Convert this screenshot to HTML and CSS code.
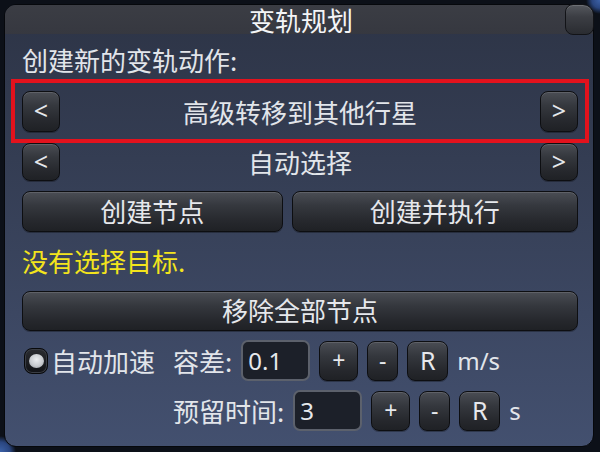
FILE: index.html
```html
<!DOCTYPE html>
<html lang="zh-CN">
<head>
<meta charset="utf-8">
<title>变轨规划</title>
<link rel="stylesheet" href="styles.css">
</head>
<body>
<div class="window">
  <div class="titlebar">
    <span class="spacer"></span>
    <div class="title">变轨规划</div>
    <button class="close" aria-label="关闭"></button>
  </div>
  <div class="content">
    <div class="label">创建新的变轨动作:</div>
    <div class="selector highlight">
      <button class="btn arrow tall lat">&lt;</button>
      <div class="sel-text">高级转移到其他行星</div>
      <button class="btn arrow tall lat">&gt;</button>
    </div>
    <div class="selector">
      <button class="btn arrow lat">&lt;</button>
      <div class="sel-text">自动选择</div>
      <button class="btn arrow lat">&gt;</button>
    </div>
    <div class="btn-row">
      <button class="btn wide">创建节点</button>
      <button class="btn wide">创建并执行</button>
    </div>
    <div class="warn">没有选择目标.</div>
    <button class="btn full">移除全部节点</button>
    <div class="param-row">
      <div class="lead">
        <span class="radio"><span class="dot"></span></span>
        <span class="text">自动加速</span>
      </div>
      <div class="controls">
        <span class="text">容差:</span>
        <div class="field lat">0.1</div>
        <button class="btn small plus lat">+</button>
        <button class="btn small minus lat">-</button>
        <button class="btn small reset lat">R</button>
        <span class="unit lat">m/s</span>
      </div>
    </div>
    <div class="param-row">
      <div class="lead"></div>
      <div class="controls">
        <span class="text">预留时间:</span>
        <div class="field lat">3</div>
        <button class="btn small plus lat">+</button>
        <button class="btn small minus lat">-</button>
        <button class="btn small reset lat">R</button>
        <span class="unit lat">s</span>
      </div>
    </div>
  </div>
</div>
</body>
</html>
```

FILE: styles.css
```css
* { box-sizing: border-box; }

html, body {
  margin: 0;
  width: 600px;
  height: 452px;
  overflow: hidden;
}

body {
  padding: 4px;
  background:
    radial-gradient(circle at 0 452px, #3d62a8 0, #2a4680 10px, rgba(13,17,25,0) 16px),
    radial-gradient(circle at 600px 0, #3d62a8 0, #2a4680 8px, rgba(13,17,25,0) 14px),
    #0c1018;
  font-family: "Noto Sans CJK SC", "Noto Sans", sans-serif;
  font-size: 26px;
  color: #e2e5ea;
}

.lat {
  font-family: "Noto Sans", "Open Sans", "Noto Sans CJK SC", sans-serif;
}

.window {
  width: 590px;
  height: 443px;
  border-radius: 12px;
  border: 1px solid #06080c;
  background: linear-gradient(#2d3446 0%, #343d53 35%, #3c4762 70%, #43506f 100%);
  display: flex;
  flex-direction: column;
}

.titlebar {
  height: 29px;
  flex: none;
  display: grid;
  grid-template-columns: 1fr auto 1fr;
  align-items: start;
  border-radius: 11px 11px 0 0;
  background: linear-gradient(#3b3d44, #363840);
}

.title {
  line-height: 29px;
  color: #f4f5f7;
  padding-left: 4px;
}

.close {
  justify-self: end;
  width: 29px;
  height: 31px;
  margin: -1px -1px 0 0;
  border-radius: 8px 11px 8px 8px;
  border: 1px solid #121317;
  background: linear-gradient(#55585e 0%, #3c3e44 40%, #2a2c31 100%);
  box-shadow: inset 0 1px 0 rgba(255,255,255,0.15);
  padding: 0;
}

.content {
  padding: 0 15px 0 17px;
  display: flex;
  flex-direction: column;
}

.label {
  margin-top: 11px;
  line-height: 30px;
  height: 30px;
}

.selector {
  display: flex;
  align-items: center;
  height: 38px;
}

.selector.highlight {
  margin: 4px -11px 0 -11px;
  height: 64px;
  border: 4px solid #e3121d;
  padding: 4px 7px 3px 7px;
}

.sel-text {
  flex: 1;
  text-align: center;
  line-height: 38px;
}

.btn {
  font-family: inherit;
  font-size: 26px;
  color: #e6e8ec;
  border: 1px solid #0d0e11;
  border-radius: 8px;
  background: linear-gradient(#4a4d54 0%, #35383e 35%, #26282d 75%, #1f2125 100%);
  box-shadow: inset 0 1px 0 rgba(255,255,255,0.12), 0 1px 0 rgba(0,0,0,0.3);
  padding: 0;
  margin: 0;
  display: flex;
  align-items: center;
  justify-content: center;
  line-height: 1;
}

.btn.lat {
  font-family: "Noto Sans", "Open Sans", sans-serif;
  font-size: 23px;
}

.arrow {
  width: 38px;
  height: 38px;
  flex: none;
  font-size: 25px !important;
  padding-bottom: 2px;
}

.arrow.tall {
  height: 41px;
}

.btn-row {
  margin-top: 10px;
  display: flex;
  gap: 9px;
}

.wide {
  flex: 1 1 auto;
  height: 41px;
  padding-bottom: 2px;
}

.warn {
  margin-top: 14px;
  line-height: 30px;
  height: 30px;
  color: #f3e41c;
}

.full {
  margin-top: 15px;
  width: 100%;
  height: 40px;
  padding-bottom: 2px;
}

.param-row {
  margin-top: 9px;
  height: 41px;
  display: grid;
  grid-template-columns: 151px 1fr;
  align-items: center;
}

.lead {
  display: flex;
  align-items: center;
  gap: 3px;
  padding-left: 2px;
}

.controls {
  display: flex;
  align-items: center;
  gap: 9px;
}

.text {
  line-height: 30px;
}

.radio {
  width: 24px;
  height: 26px;
  border-radius: 8px;
  background: linear-gradient(#2a2c31, #111216);
  border: 1px solid #08090b;
  box-shadow: inset 0 0 0 1px #3a3d44;
  display: flex;
  align-items: center;
  justify-content: center;
}

.dot {
  width: 15px;
  height: 14px;
  border-radius: 50%;
  background: radial-gradient(circle at 50% 40%, #eceef1 0%, #c8cbd0 55%, #8f939a 100%);
}

.field {
  width: 69px;
  height: 41px;
  border: 2px solid #5c616c;
  border-radius: 7px;
  background: #1c2029;
  padding: 0 5px;
  font-size: 24px;
  line-height: 37px;
  color: #e6e8ec;
}

.small {
  height: 40px;
}

.plus { width: 39px; }
.minus { width: 31px; }
.reset { width: 41px; font-size: 25px !important; }

.unit {
  font-size: 24px;
  line-height: 30px;
}
```
